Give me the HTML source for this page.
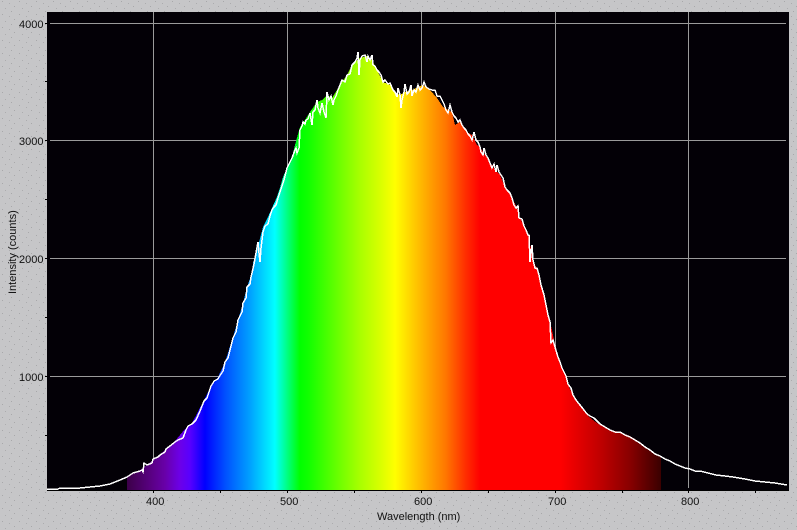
<!DOCTYPE html>
<html>
<head>
<meta charset="utf-8">
<style>
html,body{margin:0;padding:0;background:#c6c6c8;width:797px;height:530px;overflow:hidden}
svg{display:block;position:absolute;left:0;top:0}
text{font-family:"Liberation Sans",sans-serif;font-size:11px;fill:#111}
</style>
</head>
<body>
<svg width="797" height="530" viewBox="0 0 797 530" xmlns="http://www.w3.org/2000/svg">
<defs>
<pattern id="dots" width="17" height="13" patternUnits="userSpaceOnUse">
<rect x="2" y="1" width="1" height="1" fill="#a8a8aa"/>
<rect x="9" y="3" width="1" height="1" fill="#acacae"/>
<rect x="14" y="6" width="1" height="1" fill="#a8a8aa"/>
<rect x="5" y="8" width="1" height="1" fill="#acacae"/>
<rect x="11" y="11" width="1" height="1" fill="#a8a8aa"/>
</pattern>
<linearGradient id="spec" gradientUnits="userSpaceOnUse" x1="127" y1="0" x2="661" y2="0">
<stop offset="0" stop-color="#3c0048"/>
<stop offset="0.043" stop-color="#580080"/>
<stop offset="0.071" stop-color="#6800a8"/>
<stop offset="0.099" stop-color="#6c00e8"/>
<stop offset="0.118" stop-color="#5800ff"/>
<stop offset="0.146" stop-color="#0000ff"/>
<stop offset="0.184" stop-color="#0050ff"/>
<stop offset="0.230" stop-color="#00a0ff"/>
<stop offset="0.277" stop-color="#00ffff"/>
<stop offset="0.324" stop-color="#00ff00"/>
<stop offset="0.339" stop-color="#10ff00"/>
<stop offset="0.399" stop-color="#70ff00"/>
<stop offset="0.436" stop-color="#a8ff00"/>
<stop offset="0.474" stop-color="#d8ff00"/>
<stop offset="0.502" stop-color="#ffff00"/>
<stop offset="0.539" stop-color="#ffc800"/>
<stop offset="0.567" stop-color="#ffa000"/>
<stop offset="0.596" stop-color="#ff7800"/>
<stop offset="0.633" stop-color="#ff3000"/>
<stop offset="0.661" stop-color="#ff0000"/>
<stop offset="0.811" stop-color="#ff0000"/>
<stop offset="0.886" stop-color="#c00000"/>
<stop offset="0.942" stop-color="#880000"/>
<stop offset="1" stop-color="#3a0000"/>
</linearGradient>
<clipPath id="c"><rect x="127" y="12" width="534" height="478"/></clipPath>
</defs>
<rect width="797" height="530" fill="#c6c6c8"/>
<rect width="797" height="530" fill="url(#dots)"/>
<rect x="47" y="12" width="742" height="478" fill="#030006"/>
<g fill="#9a9a9a" shape-rendering="crispEdges">
<rect x="50" y="23" width="736" height="1"/>
<rect x="50" y="140" width="736" height="1"/>
<rect x="50" y="258" width="736" height="1"/>
<rect x="50" y="376" width="736" height="1"/>
<rect x="153" y="12" width="1" height="476"/>
<rect x="287" y="12" width="1" height="476"/>
<rect x="421" y="12" width="1" height="476"/>
<rect x="555" y="12" width="1" height="476"/>
<rect x="688" y="12" width="1" height="476"/>
</g>
<path clip-path="url(#c)" fill="url(#spec)" shape-rendering="crispEdges" d="M47,490 L47,489 80,489 100,487 127,477 143,468 153,460 165,450 175,441 185,429 192,423 204,400 211,386 218,377 225,362 233,337 238,320 243,303 247,287 252,273 253,263 257,250 263,227 268,217 272,208 277,197 280,188 283,177 287,168 292,157 295,145 300,127 305,120 310,112 317,102 322,100 327,95 332,98 337,90 342,82 347,75 352,65 357,60 360,58 367,56 372,60 377,70 383,82 390,85 395,92 400,95 405,92 412,90 418,87 423,85 430,90 437,98 443,107 452,112 455,125 460,122 467,132 472,135 477,145 480,147 485,155 490,162 495,170 500,175 505,187 512,198 517,208 520,218 525,228 528,235 530,245 535,265 538,270 542,290 547,310 552,330 555,345 560,365 565,375 568,385 573,395 580,405 587,415 593,420 600,425 610,430 620,432 630,436 640,442 650,450 660,456 670,462 680,466 690,470 710,474 733,477 760,481 787,484 L787,490 Z"/>
<polyline fill="none" stroke="#ffffff" stroke-width="1.5" stroke-linejoin="miter" shape-rendering="crispEdges" points="47,489 55,489 58,489 60,488 80,488 90,487 100,486 110,484 120,480 127,477 133,473 140,471 142,470 143,472 144,463 147,465 152,463 153,459 158,457 160,455 165,452 166,449 170,446 175,442 178,440 183,438 186,430 188,426 192,424 196,420 200,411 204,401 207,398 211,386 213,383 214,381 218,379 219,377 223,371 225,362 228,358 233,338 236,332 238,320 242,312 243,303 246,298 247,287 250,284 251,277 252,273 254,264 258,242 259,253 260,262 261,248 263,232 265,226 268,224 270,216 272,210 274,207 276,205 278,198 280,192 282,186 284,180 285,176 287,168 292,158 295,150 296,148 297,153 299,148 300,130 302,126 303,122 305,124 306,120 308,119 310,113 312,125 313,112 315,110 317,100 318,108 320,113 322,103 324,112 326,118 327,92 329,100 331,96 333,105 334,100 336,96 338,90 340,85 342,80 345,82 347,75 350,74 352,65 355,62 357,58 358,52 359,75 360,60 362,56 365,55 367,62 368,56 370,60 372,55 373,65 375,66 377,70 379,72 381,75 383,82 385,80 388,84 390,83 393,90 395,92 397,97 398,88 400,95 401,108 402,100 404,92 405,84 407,94 409,92 411,85 412,96 414,90 416,92 418,85 420,90 422,88 424,82 426,87 429,89 432,90 435,90 437,96 440,96 442,100 444,104 446,110 448,113 450,105 452,112 454,116 456,118 458,122 460,120 462,125 464,128 466,130 468,134 470,136 472,140 474,132 476,140 478,142 480,147 481,152 483,155 484,148 486,155 488,158 490,163 492,168 494,164 496,172 497,165 499,172 501,175 503,178 505,187 507,190 510,193 512,198 514,205 516,208 518,206 519,218 522,219 524,226 526,230 528,235 529,235 530,262 532,245 533,260 535,268 537,268 539,275 541,285 544,295 546,305 548,315 550,322 551,343 553,340 555,347 558,357 560,362 562,368 564,372 566,376 568,384 571,388 573,395 576,400 580,405 584,410 587,414 590,416 594,418 597,421 600,424 605,427 610,430 615,432 620,432 625,435 630,437 635,440 640,443 645,447 650,450 655,454 660,456 665,459 670,461 675,464 680,466 685,468 690,469 695,471 700,471 708,473 716,475 725,476 733,477 745,479 755,481 765,482 775,483 787,485"/>
<g fill="#000" shape-rendering="crispEdges">
<rect x="47" y="490" width="742" height="1"/>
<rect x="45" y="23" width="2" height="1"/>
<rect x="45" y="81" width="2" height="1"/>
<rect x="45" y="140" width="2" height="1"/>
<rect x="45" y="199" width="2" height="1"/>
<rect x="45" y="258" width="2" height="1"/>
<rect x="45" y="317" width="2" height="1"/>
<rect x="45" y="376" width="2" height="1"/>
<rect x="45" y="435" width="2" height="1"/>
<rect x="153" y="491" width="1" height="2"/>
<rect x="220" y="491" width="1" height="2"/>
<rect x="287" y="491" width="1" height="2"/>
<rect x="354" y="491" width="1" height="2"/>
<rect x="421" y="491" width="1" height="2"/>
<rect x="488" y="491" width="1" height="2"/>
<rect x="555" y="491" width="1" height="2"/>
<rect x="622" y="491" width="1" height="2"/>
<rect x="688" y="491" width="1" height="2"/>
<rect x="755" y="491" width="1" height="2"/>
</g>
<text x="19" y="28">4000</text>
<text x="19" y="145">3000</text>
<text x="19" y="263">2000</text>
<text x="19" y="381">1000</text>
<text x="146" y="505">400</text>
<text x="280" y="505">500</text>
<text x="414" y="505">600</text>
<text x="548" y="505">700</text>
<text x="681" y="505">800</text>
<text x="377" y="520">Wavelength (nm)</text>
<text transform="translate(16,294) rotate(-90)">Intensity (counts)</text>
</svg>
</body>
</html>
